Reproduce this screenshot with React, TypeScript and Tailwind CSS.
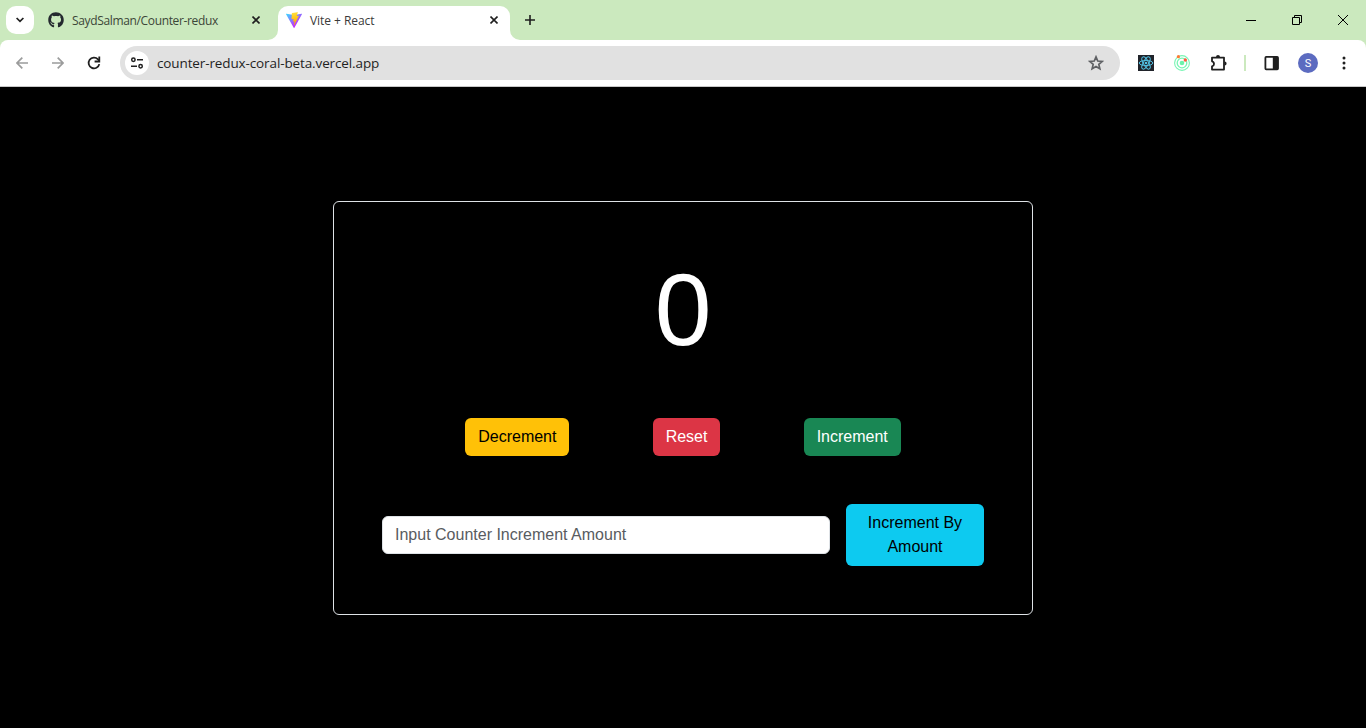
import React, { useState } from "react";
import { FaGithub } from "react-icons/fa";

function ViteLogo() {
  return (
    <svg width="16" height="16" viewBox="0 0 256 257" preserveAspectRatio="none">
      <defs>
        <linearGradient id="viteA" x1="-.828%" x2="57.636%" y1="7.652%" y2="78.411%">
          <stop offset="0%" stopColor="#41D1FF" />
          <stop offset="100%" stopColor="#BD34FE" />
        </linearGradient>
        <linearGradient id="viteB" x1="43.376%" x2="50.316%" y1="2.242%" y2="89.03%">
          <stop offset="0%" stopColor="#FFEA83" />
          <stop offset="8.333%" stopColor="#FFDD35" />
          <stop offset="100%" stopColor="#FFA800" />
        </linearGradient>
      </defs>
      <path
        fill="url(#viteA)"
        d="M255.153 37.938L134.897 252.976c-2.483 4.44-8.862 4.466-11.382.048L.875 37.958c-2.746-4.814 1.371-10.646 6.827-9.67l120.385 21.517a6.537 6.537 0 0 0 2.322-.004l117.867-21.483c5.438-.991 9.574 4.796 6.877 9.62Z"
      />
      <path
        fill="url(#viteB)"
        d="M185.432.063L96.44 17.501a3.268 3.268 0 0 0-2.634 3.014l-5.474 92.456a3.268 3.268 0 0 0 3.997 3.378l24.777-5.718c2.318-.535 4.413 1.507 3.936 3.838l-7.361 36.047c-.495 2.426 1.782 4.5 4.151 3.78l15.304-4.649c2.372-.72 4.652 1.36 4.15 3.788l-11.698 56.621c-.732 3.542 3.979 5.473 5.943 2.437l1.313-2.028l72.516-144.72c1.215-2.423-.88-5.186-3.54-4.672l-25.505 4.922c-2.396.462-4.435-1.77-3.759-4.114l16.646-57.705c.677-2.35-1.37-4.583-3.769-4.113Z"
      />
    </svg>
  );
}

function CloseIcon() {
  return (
    <svg width="8" height="8" viewBox="0 0 8 8" fill="none" stroke="#1f1f1f" strokeWidth="1.6">
      <path d="M0.5 0.5l7 7M7.5 0.5l-7 7" />
    </svg>
  );
}

function TabStrip() {
  return (
    <div className="flex h-10 items-start bg-[#cbe9be]">
      <div className="mt-1.5 ml-1.5 flex size-7 items-center justify-center rounded-[10px] bg-white">
        <svg width="8" height="6" viewBox="0 0 8 6" fill="none" stroke="#1f1f1f" strokeWidth="1.7">
          <path d="M0.6 1l3.4 3.4L7.4 1" />
        </svg>
      </div>
      <div className="flex h-10 w-[234px] items-center pr-2 pl-3.5">
        <FaGithub className="size-4 shrink-0 text-[#24292f]" />
        <span className="mt-0.5 ml-2 flex-1 text-[12px] tracking-[-0.35px] whitespace-nowrap text-[#3c4638]">
          SaydSalman/Counter-redux
        </span>
        <CloseIcon />
      </div>
      <svg className="mt-[30px] shrink-0" width="10" height="10" viewBox="0 0 10 10">
        <path d="M10 0v10H0A10 10 0 0 0 10 0z" fill="#fff" />
      </svg>
      <div className="mt-1.5 flex h-[34px] w-[232px] items-center rounded-t-[10px] bg-white pr-3 pb-[6px] pl-2">
        <ViteLogo />
        <span className="mt-0.5 ml-2 flex-1 text-[12px] tracking-[-0.05px] whitespace-nowrap text-[#3a3a3a]">
          Vite + React
        </span>
        <CloseIcon />
      </div>
      <svg className="mt-[30px] shrink-0" width="10" height="10" viewBox="0 0 10 10">
        <path d="M0 0v10h10A10 10 0 0 1 0 0z" fill="#fff" />
      </svg>
      <svg className="mt-[15px] ml-[5px]" width="10" height="10" viewBox="0 0 10 10" stroke="#1f1f1f" strokeWidth="1.6">
        <path d="M5 0v10M0 5h10" />
      </svg>
      <div className="ml-auto flex h-10">
        <div className="flex w-[46px] items-center justify-center">
          <svg width="10" height="10" viewBox="0 0 10 10">
            <path d="M0 5h10v1H0z" fill="#000" />
          </svg>
        </div>
        <div className="flex w-[46px] items-center justify-center">
          <svg width="10" height="10" viewBox="0 0 10 10" fill="none" stroke="#000">
            <path d="M0.5 2.5h7v7h-7zM2.5 2.5v-2h7v7h-2" />
          </svg>
        </div>
        <div className="flex w-[46px] items-center justify-center">
          <svg width="10" height="10" viewBox="0 0 10 10" stroke="#000" strokeWidth="1">
            <path d="M0 0l10 10M10 0L0 10" />
          </svg>
        </div>
      </div>
    </div>
  );
}

function Cell({ children }: { children: React.ReactNode }) {
  return <div className="flex w-9 shrink-0 items-center justify-center">{children}</div>;
}

function Toolbar() {
  return (
    <div className="bg-[#cbe9be]">
      <div className="flex h-[47px] rounded-t-lg border-b border-[#c8c8c8] bg-white px-1">
        <Cell>
          <svg width="12" height="12" viewBox="0 0 12 12" fill="none" stroke="#9b9c9c" strokeWidth="1.7">
            <path d="M12 6H1M6.3 0.7L1 6l5.3 5.3" />
          </svg>
        </Cell>
        <Cell>
          <svg width="12" height="12" viewBox="0 0 12 12" fill="none" stroke="#9b9c9c" strokeWidth="1.7">
            <path d="M0 6h11M5.7 0.7L11 6l-5.3 5.3" />
          </svg>
        </Cell>
        <Cell>
          <svg width="14" height="14" viewBox="0 0 14 14" fill="none" stroke="#1f1f1f" strokeWidth="1.8">
            <path d="M12.3 8.1A5.4 5.4 0 1 1 11 3.3L12.2 4.8" />
            <path d="M12.3 0.6v4.9H7.6" />
          </svg>
        </Cell>
        <div className="mt-1.5 ml-2 flex h-[34px] w-[1000px] items-center rounded-full bg-[#e1e1e1] pr-4 pl-[5px]">
          <div className="flex size-6 items-center justify-center rounded-full bg-white">
            <svg width="14" height="12" viewBox="0 0 14 12" fill="none" stroke="#1f1f1f" strokeWidth="1.5">
              <circle cx="3.4" cy="2.8" r="1.7" />
              <path d="M7 2.8h6M1 9.2h6" />
              <circle cx="10.6" cy="9.2" r="1.7" />
            </svg>
          </div>
          <span className="mt-px ml-2 flex-1 text-[13.5px] tracking-[-0.12px] whitespace-nowrap text-[#1f1f1f]">
            counter-redux-coral-beta.vercel.app
          </span>
          <svg width="16" height="16" viewBox="0 0 16 16" fill="none" stroke="#5f6164" strokeWidth="1.7">
            <path d="M8 1.9l1.75 4.15 4.5.38-3.42 2.95 1.03 4.4L8 11.45l-3.86 2.33 1.03-4.4L1.75 6.43l4.5-.38z" />
          </svg>
        </div>
        <div className="ml-2 flex">
          <Cell>
            <svg width="16" height="16" viewBox="0 0 16 16" fill="none" stroke="#53c1e3" strokeWidth="1">
              <rect width="16" height="16" fill="#20232a" stroke="none" />
              <ellipse cx="8" cy="8" rx="6.8" ry="2.6" />
              <ellipse cx="8" cy="8" rx="6.8" ry="2.6" transform="rotate(60 8 8)" />
              <ellipse cx="8" cy="8" rx="6.8" ry="2.6" transform="rotate(120 8 8)" />
              <circle cx="8" cy="8" r="1.3" fill="#53c1e3" stroke="none" />
            </svg>
          </Cell>
          <Cell>
            <svg width="16" height="16" viewBox="0 0 16 16" fill="none" stroke="#78f5b4">
              <circle cx="8" cy="8" r="7.4" strokeWidth="1.1" />
              <circle cx="8" cy="8" r="4.8" strokeWidth="1.3" />
              <circle cx="8" cy="8" r="2.3" fill="#6df2ab" stroke="none" />
              <circle cx="4.4" cy="1.7" r="1.6" fill="#ff7a33" stroke="none" />
              <circle cx="11.3" cy="5" r="1.7" fill="#ff5a3c" stroke="none" />
            </svg>
          </Cell>
          <Cell>
            <svg width="18" height="18" viewBox="0 0 18 18">
              <path
                d="M3 3.6h12v12H3v-3.3c1.3-.3 2-1.2 2-2.4S4.3 7.6 3 7.3z"
                fill="none"
                stroke="#1f1f1f"
                strokeWidth="1.8"
                strokeLinejoin="round"
              />
              <path d="M7 3a2 2 0 0 1 4 0zM15.6 7.6a2 2 0 0 1 0 4z" fill="#1f1f1f" />
            </svg>
          </Cell>
          <div className="flex w-[18px] items-center justify-center">
            <div className="h-4 w-0.5 bg-[#cbe9be]" />
          </div>
          <Cell>
            <svg width="16" height="16" viewBox="0 0 16 16">
              <rect x="1.4" y="1.9" width="12.6" height="12.4" rx="0.8" fill="none" stroke="#1f1f1f" strokeWidth="1.8" />
              <path d="M8.8 2H14v12H8.8z" fill="#1f1f1f" />
            </svg>
          </Cell>
          <Cell>
            <div className="flex size-5 items-center justify-center rounded-full bg-[#5c6bc0] font-[Roboto] text-[11px] leading-none text-white">
              S
            </div>
          </Cell>
          <Cell>
            <svg width="4" height="14" viewBox="0 0 4 14" fill="#1f1f1f">
              <circle cx="2" cy="2" r="1.5" />
              <circle cx="2" cy="7" r="1.5" />
              <circle cx="2" cy="12" r="1.5" />
            </svg>
          </Cell>
        </div>
      </div>
    </div>
  );
}

function Counter() {
  const [count, setCount] = useState(0);
  const [amount, setAmount] = useState("");
  return (
    <div className="h-[414px] w-[700px] rounded-md border border-[#dee2e6] p-12 text-base leading-6">
      <div className="text-center text-[102px] leading-[120px] text-white">{count}</div>
      <div className="mt-12 flex justify-evenly">
        <button className="h-[38px] rounded-md bg-[#ffc107] px-[13px] text-black" onClick={() => setCount(count - 1)}>
          Decrement
        </button>
        <button className="h-[38px] rounded-md bg-[#dc3545] px-[13px] text-white" onClick={() => setCount(0)}>
          Reset
        </button>
        <button className="h-[38px] rounded-md bg-[#198754] px-[13px] text-white" onClick={() => setCount(count + 1)}>
          Increment
        </button>
      </div>
      <div className="mt-12 flex items-center gap-4">
        <input
          className="h-[38px] w-[448px] rounded-md border border-[#dee2e6] bg-white px-3 text-[#212529] placeholder:text-[#595c5f]"
          placeholder="Input Counter Increment Amount"
          value={amount}
          onChange={(e) => setAmount(e.target.value)}
        />
        <button
          className="h-[62px] w-[138px] rounded-md bg-[#0dcaf0] px-3 text-black"
          onClick={() => setCount(count + (Number(amount) || 0))}
        >
          Increment By Amount
        </button>
      </div>
    </div>
  );
}

export default function App() {
  return (
    <div className="flex h-[728px] w-[1366px] flex-col overflow-hidden bg-black">
      <div className="font-['Open_Sans','Noto_Sans',sans-serif]">
        <TabStrip />
        <Toolbar />
      </div>
      <div className="flex flex-1 items-center justify-center font-['Liberation_Sans',Arial,sans-serif]">
        <Counter />
      </div>
    </div>
  );
}
